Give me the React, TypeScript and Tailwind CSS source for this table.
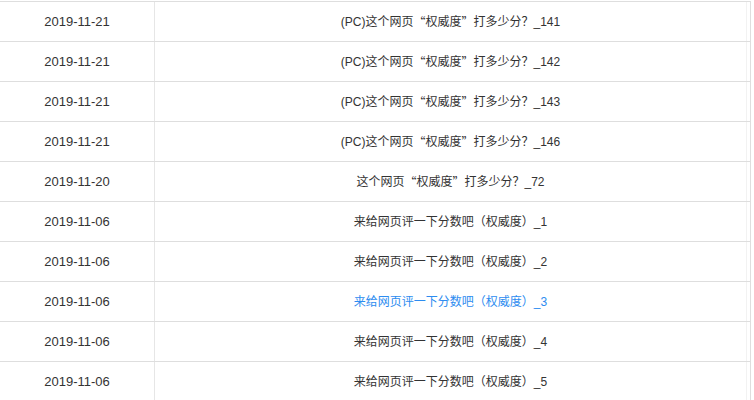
const ROWS = [
  { date: '2019-11-21', title: '(PC)这个网页“权威度”打多少分？_141' },
  { date: '2019-11-21', title: '(PC)这个网页“权威度”打多少分？_142' },
  { date: '2019-11-21', title: '(PC)这个网页“权威度”打多少分？_143' },
  { date: '2019-11-21', title: '(PC)这个网页“权威度”打多少分？_146' },
  { date: '2019-11-20', title: '这个网页“权威度”打多少分？_72' },
  { date: '2019-11-06', title: '来给网页评一下分数吧（权威度）_1' },
  { date: '2019-11-06', title: '来给网页评一下分数吧（权威度）_2' },
  { date: '2019-11-06', title: '来给网页评一下分数吧（权威度）_3', active: true },
  { date: '2019-11-06', title: '来给网页评一下分数吧（权威度）_4' },
  { date: '2019-11-06', title: '来给网页评一下分数吧（权威度）_5' },
]

// quotes come from the CJK font so they are full width
function Title({ text }: { text: string }) {
  const parts = text.split(/([“”])/)
  return (
    <>
      {parts.map((p, i) =>
        p === '“' || p === '”' ? (
          <span key={i} lang="zh-CN" style={{ fontFamily: '"Noto Sans CJK SC", sans-serif' }}>
            {p}
          </span>
        ) : (
          <span key={i}>{p}</span>
        )
      )}
    </>
  )
}

export default function App() {
  return (
    <div
      className="w-[754px] h-[400px] overflow-hidden bg-white pt-px text-[#333]"
      style={{ fontFamily: '"Liberation Sans", "Noto Sans CJK SC", sans-serif' }}
    >
      <div className="w-[751px] border-r border-[#dedede]">
        {ROWS.map((r, i) => (
          <div key={i} className="flex h-10 border-t border-[#dedede]">
            <div className="w-[155px] flex items-center justify-center border-r border-[#e6e6e6] text-[13px]">
              {r.date}
            </div>
            <div
              className={`flex-1 flex items-center justify-center text-[12px] ${r.active ? 'text-[#2d8cf0]' : ''}`}
            >
              <Title text={r.title} />
            </div>
            <div className="w-[4px] border-l border-[#f2f2f2]" />
          </div>
        ))}
      </div>
    </div>
  )
}
